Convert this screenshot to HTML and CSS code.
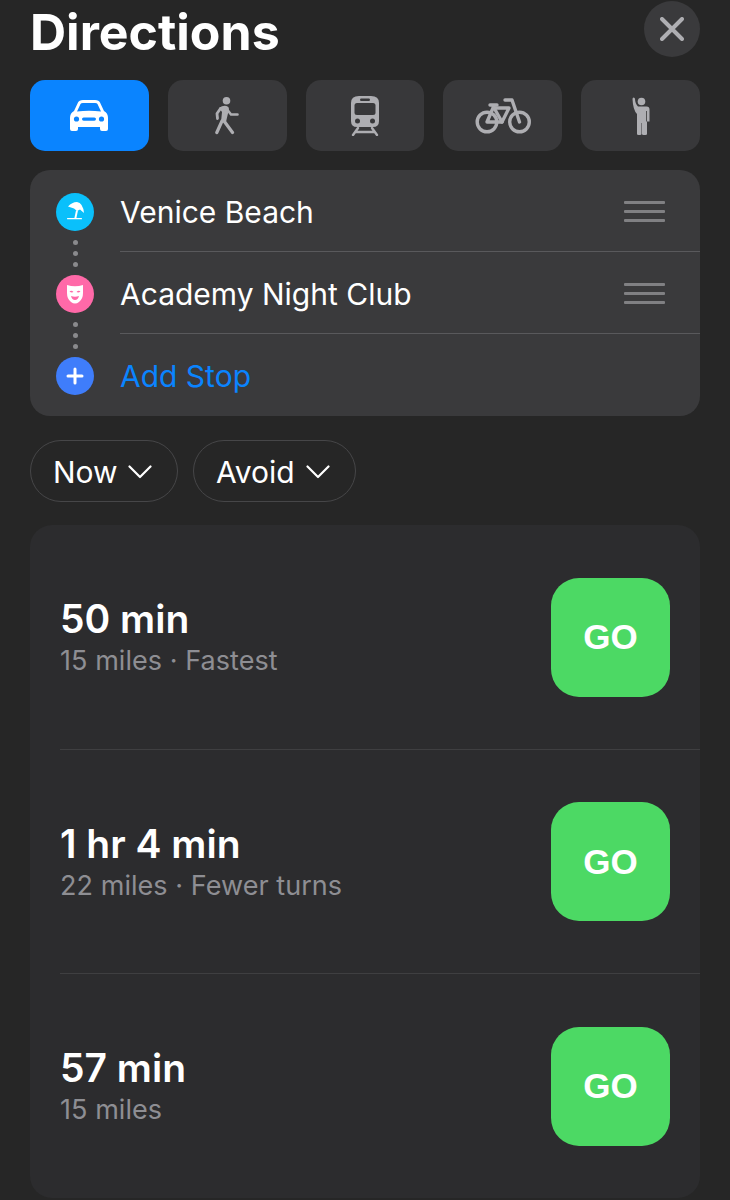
FILE: index.html
```html
<!DOCTYPE html>
<html lang="en">
<head>
    <meta charset="UTF-8">
    <meta name="viewport" content="width=device-width, initial-scale=1.0">
    <title>Directions</title>
    <link rel="stylesheet" href="styles.css">
</head>
<body>
    <div class="header">
        <div class="title">Directions</div>
        <div class="close">
            <svg width="24" height="24" viewBox="0 0 24 24"><path d="M2 2L22 22M22 2L2 22" stroke="#aeaeb2" stroke-width="4" stroke-linecap="round"/></svg>
        </div>
    </div>

    <div class="modes">
        <div class="mode active">
            <svg width="40" height="32" viewBox="0 0 40 32">
                <path fill="#fff" d="M9 2.500Q10 0 14 0H26Q30 0 31 2.500L35 11Q39 13 39 18V29Q39 31 37 31H33Q31 31 31 29V27H9V29Q9 31 7 31H3Q1 31 1 29V18Q1 13 5 11Z"/>
                <path fill="#0a84ff" d="M8 11.500L11.500 4Q12 3 14 3H26Q28 3 28.500 4L32 11.500Q20 10 8 11.500Z"/>
                <circle cx="7.500" cy="19" r="2.600" fill="#0a84ff"/>
                <circle cx="32.500" cy="19" r="2.600" fill="#0a84ff"/>
                <rect x="13" y="17.400" width="14" height="3.400" rx="1.700" fill="#0a84ff"/>
            </svg>
        </div>
        <div class="mode">
            <svg width="24" height="38" viewBox="0 0 24 38" fill="none" stroke="#aeaeb2" stroke-linecap="round" stroke-linejoin="round">
                <circle cx="11.500" cy="3.800" r="3.800" fill="#aeaeb2" stroke="none"/>
                <path fill="#aeaeb2" stroke="none" d="M4 11Q8 8 11.500 9Q14 9.500 14 12L11 25H6L7 15Z"/>
                <path stroke-width="2.800" d="M5.500 11.500L2 16.500L2.500 21.500"/>
                <path stroke-width="2.600" d="M12.500 13L16 17.500H22.500"/>
                <path stroke-width="3.200" d="M7 24L1.800 35.500M9 24L17.500 35.500"/>
            </svg>
        </div>
        <div class="mode">
            <svg width="30" height="40" viewBox="0 0 30 40" fill="none">
                <path fill="#aeaeb2" d="M9 0H21Q29 0 29 7V25Q29 31 23 31H7Q1 31 1 25V7Q1 0 9 0Z"/>
                <rect x="10" y="2.500" width="10" height="2.500" rx="1.200" fill="#38383a"/>
                <rect x="4.500" y="7" width="21" height="12" rx="2.500" fill="#38383a"/>
                <circle cx="7.500" cy="25" r="2.500" fill="#38383a"/>
                <circle cx="22.500" cy="25" r="2.500" fill="#38383a"/>
                <path stroke="#aeaeb2" stroke-width="2.400" stroke-linecap="round" d="M8 32L3 39M22 32L27 39M6 36H24"/>
            </svg>
        </div>
        <div class="mode">
            <svg width="56" height="36" viewBox="0 0 56 36" fill="none" stroke="#aeaeb2" stroke-width="3.400" stroke-linecap="round" stroke-linejoin="round">
                <circle cx="12" cy="24" r="9.800"/>
                <circle cx="44.500" cy="24" r="9.800"/>
                <path d="M12 24L18 10H34L27 24H12Z"/>
                <path d="M30 2H37L44.500 24M15 7H22M18 8L27 24"/>
            </svg>
        </div>
        <div class="mode">
            <svg width="18" height="38" viewBox="0 0 18 38" fill="#aeaeb2">
                <circle cx="9.500" cy="4.500" r="3.800"/>
                <path d="M6 9.500H14.500Q17.500 9.500 17.500 12.500V24.500H15V37Q15 38 13.500 38H11.500Q10 38 10 37V26H9.500V37Q9.500 38 8 38H6.500Q5 38 5 37V17Q1 13 0.500 2Q0.500 0.500 1.700 0.500Q2.900 0.500 3 2Q3.200 7 6 9.500Z"/>
                <path d="M14.500 14V24.500" stroke="#38383a" stroke-width="0.800"/>
            </svg>
        </div>
    </div>

    <div class="stops">
        <div class="stop-icons">
            <div class="dot-icon beach">
                <svg width="22" height="20" viewBox="0 0 22 20" fill="#fff">
                    <path d="M4 4.500Q8 0 13 0Q19 1 20 11L16 7.500L13 9L10 6.500Z"/>
                    <path d="M12 8.500H14L12.300 16.500H10.300Z"/>
                    <rect x="3" y="16" width="15" height="1.300" rx="0.600"/>
                </svg>
            </div>
            <div class="link"><i></i><i></i><i></i></div>
            <div class="dot-icon club">
                <svg width="20" height="20" viewBox="0 0 20 20">
                    <path fill="#fff" d="M2 1Q10 3.500 18 1V9Q18 15 14 18Q12 19.500 10 19.500Q8 19.500 6 18Q2 15 2 9Z"/>
                    <path fill="#ff69a8" d="M4.500 7.500Q6.500 6 8.500 8Q6.500 9 4.500 7.500ZM11.500 8Q13.500 6 15.500 7.500Q13.500 9 11.500 8ZM6 12Q10 13.500 14 12Q13 16 10 16Q7 16 6 12Z"/>
                </svg>
            </div>
            <div class="link"><i></i><i></i><i></i></div>
            <div class="dot-icon add">
                <svg width="18" height="18" viewBox="0 0 18 18"><path d="M9 2V16M2 9H16" stroke="#fff" stroke-width="3" stroke-linecap="round"/></svg>
            </div>
        </div>
        <div class="stop-list">
            <div class="stop">
                <span>Venice Beach</span>
                <div class="grip"><i></i><i></i><i></i></div>
            </div>
            <div class="stop">
                <span>Academy Night Club</span>
                <div class="grip"><i></i><i></i><i></i></div>
            </div>
            <div class="stop add-stop">
                <span>Add Stop</span>
            </div>
        </div>
    </div>

    <div class="filters">
        <div class="pill now">Now
            <svg width="24" height="14" viewBox="0 0 24 14" fill="none"><path d="M1.500 1.500L12 12L22.500 1.500" stroke="#fff" stroke-width="2.200" stroke-linecap="round" stroke-linejoin="round"/></svg>
        </div>
        <div class="pill avoid">Avoid
            <svg width="24" height="14" viewBox="0 0 24 14" fill="none"><path d="M1.500 1.500L12 12L22.500 1.500" stroke="#fff" stroke-width="2.200" stroke-linecap="round" stroke-linejoin="round"/></svg>
        </div>
    </div>

    <div class="routes">
        <div class="route">
            <div class="route-info">
                <div class="route-time">50 min</div>
                <div class="route-sub">15 miles · Fastest</div>
            </div>
            <div class="go">GO</div>
        </div>
        <div class="route">
            <div class="route-info">
                <div class="route-time">1 hr 4 min</div>
                <div class="route-sub">22 miles · Fewer turns</div>
            </div>
            <div class="go">GO</div>
        </div>
        <div class="route">
            <div class="route-info">
                <div class="route-time">57 min</div>
                <div class="route-sub">15 miles</div>
            </div>
            <div class="go">GO</div>
        </div>
    </div>
</body>
</html>
```
FILE: styles.css
```css
*{
    box-sizing: border-box;
    margin: 0;
}
body{
    height: 1200px;
    overflow: hidden;
    padding: 1px 30px 0;
    background-color: #262626;
    color: white;
    font-family: Inter, "Liberation Sans", sans-serif;
}
.header{
    display: flex;
    justify-content: space-between;
    height: 79px;
}
.title{
    font-size: 50px;
    font-weight: 700;
    line-height: 62px;
}
.close{
    display: flex;
    align-items: center;
    justify-content: center;
    width: 56px;
    height: 56px;
    border-radius: 50%;
    background-color: #3a3a3c;
}
.modes{
    display: grid;
    grid-template-columns: repeat(5, 1fr);
    gap: 19px;
    height: 71px;
}
.mode{
    display: flex;
    align-items: center;
    justify-content: center;
    border-radius: 15px;
    background-color: #38383a;
}
.mode.active{
    background-color: #0a84ff;
}
.stops{
    display: flex;
    height: 246px;
    margin-top: 19px;
    border-radius: 20px;
    background-color: #3a3a3c;
}
.stop-icons{
    display: flex;
    flex-direction: column;
    align-items: center;
    flex: 0 0 90px;
    padding-top: 23px;
}
.dot-icon{
    display: flex;
    align-items: center;
    justify-content: center;
    width: 38px;
    height: 38px;
    border-radius: 50%;
}
.beach{
    background-color: #0ac0fb;
}
.club{
    background-color: #ff69a8;
}
.add{
    background-color: #3f7dfb;
}
.link{
    display: flex;
    flex-direction: column;
    justify-content: center;
    gap: 6px;
    height: 44px;
}
.link i{
    width: 5px;
    height: 5px;
    border-radius: 50%;
    background-color: #8a8a8d;
}
.stop-list{
    flex: 1;
}
.stop{
    display: flex;
    align-items: center;
    justify-content: space-between;
    height: 82px;
    padding: 2px 35px 0 0;
    border-bottom: 1px solid #59595c;
    font-size: 30px;
}
.add-stop{
    border-bottom: none;
    color: #0a84ff;
}
.grip{
    display: flex;
    flex-direction: column;
    gap: 6px;
    width: 41px;
}
.grip i{
    height: 3px;
    border-radius: 1px;
    background-color: #808083;
}
.filters{
    display: flex;
    gap: 15px;
    margin-top: 24px;
}
.pill{
    display: flex;
    align-items: center;
    justify-content: space-between;
    height: 62px;
    padding: 1px 25px 0 22px;
    border: 1px solid #464648;
    border-radius: 31px;
    font-size: 30px;
}
.now{
    width: 148px;
}
.avoid{
    width: 163px;
}
.routes{
    height: 673px;
    margin-top: 23px;
    padding-left: 30px;
    border-radius: 22px;
    background-color: #2c2c2e;
}
.route{
    display: flex;
    align-items: center;
    justify-content: space-between;
    height: 224.500px;
    padding: 1px 30px 0 0;
    border-bottom: 1px solid #3f3f41;
}
.route:last-child{
    border-bottom-color: transparent;
}
.route-info{
    padding-bottom: 2px;
}
.route-time{
    font-size: 39px;
    font-weight: 600;
    line-height: 48px;
}
.route-sub{
    margin-top: 2px;
    font-size: 27px;
    line-height: 32px;
    letter-spacing: 0.05px;
    color: #8e8e93;
}
.go{
    display: flex;
    align-items: center;
    justify-content: center;
    width: 119px;
    height: 119px;
    border-radius: 28px;
    background-color: #4cd964;
    font-family: "Liberation Sans", sans-serif;
    font-size: 35px;
    font-weight: 700;
}
```
